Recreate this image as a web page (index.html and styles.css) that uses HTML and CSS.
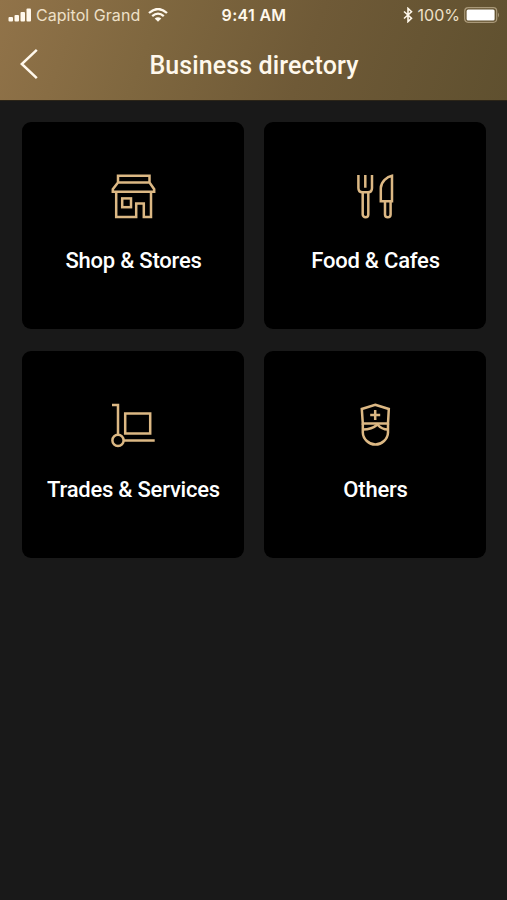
FILE: index.html
```html
<!DOCTYPE html>
<html lang="en">
<head>
    <meta charset="UTF-8">
    <meta name="viewport" content="width=device-width, initial-scale=1.0">
    <title>Business directory</title>
    <link rel="stylesheet" href="styles.css">
</head>
<body>
    <header class="header">
        <div class="status-bar">
            <div class="status-left">
                <svg class="signal" width="24" height="14" viewBox="0 0 24 14">
                    <rect x="0.5" y="9" width="4.5" height="4.5" rx="1"/>
                    <rect x="6.5" y="7" width="4.5" height="6.5" rx="1"/>
                    <rect x="12.5" y="4" width="4.5" height="9.5" rx="1"/>
                    <rect x="18.5" y="0.5" width="4.5" height="13" rx="1"/>
                </svg>
                <span class="carrier">Capitol Grand</span>
                <svg class="wifi" width="20" height="14" viewBox="0 0 20 14">
                    <path d="M1 5 Q10 -3 19 5 M4.2 8.2 Q10 3 15.8 8.2" fill="none" stroke="#fff8ec" stroke-width="2.3"/>
                    <path d="M6.7 10.5 Q10 7.8 13.3 10.5 L10 13.8 Z"/>
                </svg>
            </div>
            <div class="time">9:41 AM</div>
            <div class="status-right">
                <svg class="bluetooth" width="10" height="16" viewBox="0 0 10 16">
                    <path d="M1 4.5 L8.5 11.2 L5 14.6 V1.4 L8.5 4.8 L1 11.5" fill="none" stroke="#fff8ec" stroke-width="1.6"/>
                </svg>
                <span class="percent">100%</span>
                <svg class="battery" width="36" height="16" viewBox="0 0 36 16">
                    <rect x="0.7" y="0.7" width="32" height="14.6" rx="3.5" fill="none" stroke="#a99878" stroke-width="1.2"/>
                    <rect x="2.6" y="2.6" width="28" height="10.8" rx="1.5" fill="#fff"/>
                    <path d="M34 5.5 Q36 8 34 10.5 Z" fill="#a99878"/>
                </svg>
            </div>
        </div>
        <div class="nav-bar">
            <a class="back" href="#" aria-label="Back">
                <svg width="20" height="32" viewBox="0 0 20 32">
                    <path d="M16.8 1.8 L1.8 16 L16.8 30.2" fill="none" stroke="#fff8ec" stroke-width="2.5"/>
                </svg>
            </a>
            <h1>Business directory</h1>
        </div>
    </header>

    <main class="grid">
        <a class="card" href="#">
            <svg class="icon" viewBox="0 0 48 48">
                <path d="M9 10.5 V3.8 H40.5 V10.5 Z M9 10.5 L3.8 17.2 V19.8 H45.2 V17.2 L40.5 10.5"/>
                <path d="M7.2 19.8 V45 H27.2 V31.4 H34.8 V45 H42 V19.8" />
                <rect x="13.2" y="26.4" width="8.8" height="8.8"/>
            </svg>
            <span class="label">Shop &amp; Stores</span>
        </a>
        <a class="card" href="#">
            <svg class="icon" viewBox="0 0 48 48">
                <path d="M7.4 3 V16 Q7.4 20.3 11.5 20.3 H17 Q21 20.3 21 16 V3 M14.3 3 V15.7"/>
                <path d="M11.7 20.3 V42.4 A2.8 2.8 0 0 0 17.3 42.4 V20.3"/>
                <path d="M41 29.3 V3.8 C36 4.5 30 10 29.8 16 V29.3 Z M34 29.3 V42.4 A2.8 2.8 0 0 0 39.6 42.4 V29.3"/>
            </svg>
            <span class="label">Food &amp; Cafes</span>
        </a>
        <a class="card" href="#">
            <svg class="icon" viewBox="0 0 48 48">
                <path d="M3 4 H9 V33.5 M15 39.4 H45.7"/>
                <circle cx="9" cy="39.4" r="5.6"/>
                <rect x="16.2" y="12.5" width="25" height="20"/>
            </svg>
            <span class="label">Trades &amp; Services</span>
        </a>
        <a class="card" href="#">
            <svg class="icon" viewBox="0 0 48 48">
                <path d="M24.2 3.8 L37.8 8 L37 22.5 H11.8 L10.8 8 Z M24.2 9 V19 M19.2 14 H29.2"/>
                <path d="M11.8 22.5 V31.5 C12 38 18 43.6 24.4 43.6 S36.8 38 37 31.5 V22.5"/>
                <path d="M11.8 28.6 C18 28.5 22.5 27 26.5 23.5 C29 26.5 32 28.5 37 28.6"/>
            </svg>
            <span class="label">Others</span>
        </a>
    </main>
</body>
</html>
```
FILE: styles.css
```css
* { box-sizing: border-box; }
body { margin: 0; min-height: 900px; background: #191919; color: #fff; font-family: Roboto, "Liberation Sans", sans-serif; }
a { color: inherit; text-decoration: none; }
svg { display: block; flex: none; }

.header { height: 101px; background: linear-gradient(110deg, #917349 0%, #7f673f 30%, #6f5a37 60%, #5f502f 100%); border-bottom: 1px solid #2b2417; color: #fff8ec; }
.status-bar { display: grid; grid-template-columns: 1fr auto 1fr; align-items: center; height: 30px; padding: 0 7px 0 8px; font-family: Inter, "Liberation Sans", sans-serif; font-size: 16px; white-space: nowrap; }
.status-left, .status-right { display: flex; align-items: center; }
.status-right { justify-content: flex-end; }
.signal, .wifi { fill: #fff8ec; }
.carrier { margin: 0 8px 0 4px; color: #eee0c8; letter-spacing: 0.05px; }
.time { font-weight: 600; font-size: 16px; letter-spacing: 0.3px; }
.percent { margin: 0 4px 0 5px; color: #eee0c8; }

.nav-bar { display: grid; grid-template-columns: 38px 1fr 38px; align-items: center; height: 70px; }
.back { padding-left: 20px; }
.back svg { margin-top: -2px; }
h1 { margin: 0; padding: 2px 0 0 1px; text-align: center; font-size: 25px; font-weight: 500; line-height: 30px; letter-spacing: 0.1px; }

.grid { display: grid; grid-template-columns: 222px 222px; grid-auto-rows: 207px; gap: 22px 20px; padding: 21.4px 0 0 22px; }
.card { display: flex; flex-direction: column; align-items: center; padding-top: 49.4px; background: #000; border-radius: 9px; }
.icon { width: 48px; height: 48px; fill: none; stroke: #dcb884; stroke-width: 2.5; }
.label { margin-top: 28px; padding-left: 1px; font-size: 22px; font-weight: 500; line-height: 26px; letter-spacing: -0.22px; white-space: nowrap; }
```
